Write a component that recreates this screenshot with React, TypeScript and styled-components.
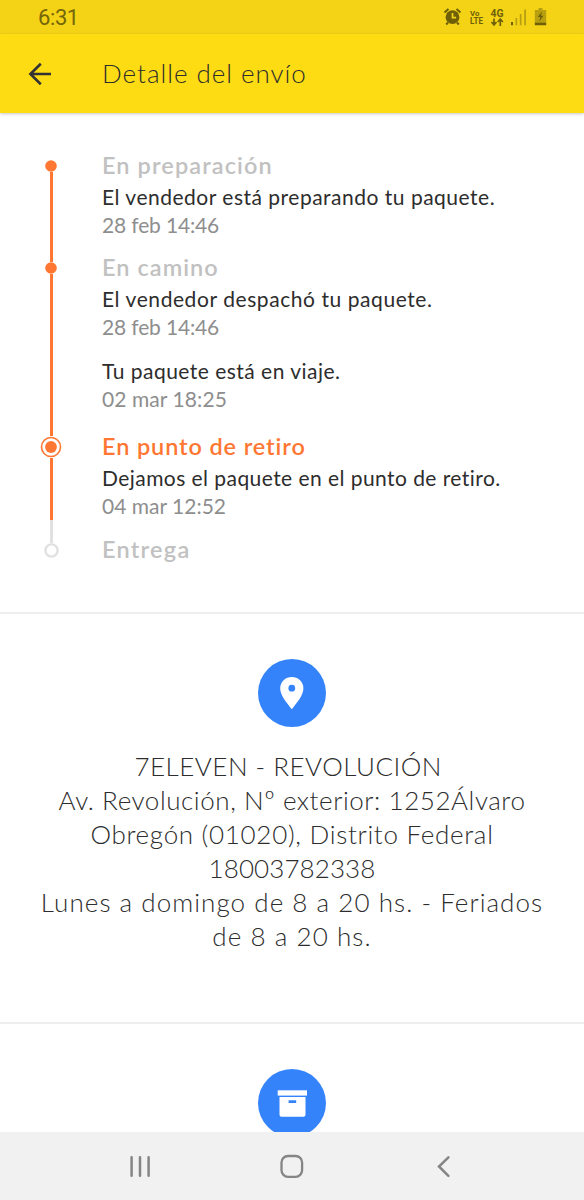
import React from 'react';
import styled, { createGlobalStyle } from 'styled-components';

const ORANGE = '#ff7733';
const GREY = '#e1e1e1';

const GlobalStyle = createGlobalStyle`
  * { box-sizing: border-box; }
  body { margin: 0; background: #fff; }
`;

const Screen = styled.div`
  width: 584px;
  height: 1200px;
  display: flex;
  flex-direction: column;
  overflow: hidden;
  background: #fff;
  color: #2d2d2d;
  font-family: Lato, 'Open Sans', sans-serif;
  font-variant-ligatures: none;
`;

const StatusBar = styled.div`
  height: 34px;
  flex: none;
  display: flex;
  justify-content: space-between;
  align-items: center;
  padding: 0 36px 0 38px;
  background: #f4d317;
  color: #75660a;
`;

const Clock = styled.span`
  font: 400 22px/34px Roboto, sans-serif;
  padding-top: 2px;
  letter-spacing: -0.4px;
`;

const StatusIcons = styled.div`
  display: flex;
  align-items: center;
  svg { display: block; }
`;

const Header = styled.header`
  height: 79px;
  flex: none;
  display: flex;
  align-items: center;
  padding-left: 28px;
  background: #fddc13;
  box-shadow: 0 1px 3px rgba(0, 0, 0, 0.22);
  z-index: 1;
`;

const Title = styled.h1<{ $track: number }>`
  margin: 0 0 2px 50px;
  font-size: 26px;
  font-weight: 300;
  line-height: 34px;
  letter-spacing: ${(p) => p.$track}px;
  white-space: nowrap;
`;

const Content = styled.main`
  flex: 1;
  min-height: 0;
  overflow: hidden;
`;

const Timeline = styled.section`
  height: 501px;
  padding: 24px 0 0 31px;
  border-bottom: 2px solid #eeeeee;
`;

const Stage = styled.div`
  display: flex;
`;

const Rail = styled.div`
  width: 40px;
  flex: none;
  display: flex;
  flex-direction: column;
  align-items: center;
  svg { display: block; }
`;

const Segment = styled.div<{ $color: string; $height?: number }>`
  width: 3px;
  background: ${(p) => p.$color};
  ${(p) => (p.$height === undefined ? 'flex: 1;' : `height: ${p.$height}px;`)}
`;

const StageBody = styled.div<{ $pad: number }>`
  padding: ${(p) => p.$pad}px 0 0 31px;
  white-space: nowrap;
`;

const StageName = styled.h2<{ $active?: boolean; $track: number }>`
  margin: 0 0 3px;
  font-size: 23.5px;
  font-weight: 600;
  line-height: 30px;
  letter-spacing: ${(p) => p.$track}px;
  color: ${(p) => (p.$active ? ORANGE : '#c1c1c1')};
`;

const Event = styled.div`
  font-size: 21px;
  line-height: 28px;
  & + & { margin-top: 16px; }
`;

const EventText = styled.div<{ $track: number }>`
  letter-spacing: ${(p) => p.$track}px;
`;

const EventDate = styled.div<{ $track: number }>`
  color: #8e8e8e;
  letter-spacing: ${(p) => p.$track}px;
`;

const Place = styled.section`
  height: 410px;
  padding-top: 45px;
  border-bottom: 2px solid #eeeeee;
  display: flex;
  flex-direction: column;
  align-items: center;
`;

const PackageInfo = styled.section`
  padding-top: 45px;
  display: flex;
  justify-content: center;
`;

const Badge = styled.div`
  width: 68px;
  height: 68px;
  flex: none;
  border-radius: 50%;
  background: #3483fa;
  svg { display: block; }
`;

const Address = styled.div`
  margin-top: 22px;
  text-align: center;
  font-size: 26px;
  font-weight: 300;
  line-height: 34px;
`;

const AddressLine = styled.div<{ $track: number }>`
  white-space: nowrap;
  letter-spacing: ${(p) => p.$track}px;
`;

const NavBar = styled.nav`
  height: 68px;
  flex: none;
  display: flex;
  justify-content: space-between;
  align-items: center;
  padding: 0 124px;
  background: #f1f1f1;
  svg { display: block; }
`;

type Marker = 'done' | 'current' | 'pending';

const markerSize: Record<Marker, number> = { done: 12, current: 22, pending: 15 };

const StageMarker = ({ kind }: { kind: Marker }) => {
  const size = markerSize[kind];
  const c = size / 2;
  return (
    <svg width={size} height={size}>
      {kind === 'done' && <circle cx={c} cy={c} r="5.8" fill={ORANGE} />}
      {kind === 'current' && (
        <>
          <circle cx={c} cy={c} r="9.5" fill="#fff" stroke={ORANGE} strokeWidth="1.6" />
          <circle cx={c} cy={c} r="5.9" fill={ORANGE} />
        </>
      )}
      {kind === 'pending' && <circle cx={c} cy={c} r="6.1" fill="#fff" stroke={GREY} strokeWidth="2.4" />}
    </svg>
  );
};

interface StageData {
  name: string;
  track: number;
  marker: Marker;
  pad: number;
  lead: number;
  before: string;
  after?: string;
  events: { text: string; track: number; date: string; dateTrack: number }[];
}

const stages: StageData[] = [
  {
    name: 'En preparación', track: 1.1, marker: 'done', pad: 13, lead: 23, before: 'transparent', after: ORANGE,
    events: [{ text: 'El vendedor está preparando tu paquete.', track: 0.5, date: '28 feb 14:46', dateTrack: -0.15 }],
  },
  {
    name: 'En camino', track: 1.05, marker: 'done', pad: 13, lead: 23, before: ORANGE, after: ORANGE,
    events: [
      { text: 'El vendedor despachó tu paquete.', track: 0.57, date: '28 feb 14:46', dateTrack: -0.15 },
      { text: 'Tu paquete está en viaje.', track: 0.48, date: '02 mar 18:25', dateTrack: 0.08 },
    ],
  },
  {
    name: 'En punto de retiro', track: 0.88, marker: 'current', pad: 18, lead: 23, before: ORANGE, after: ORANGE,
    events: [{ text: 'Dejamos el paquete en el punto de retiro.', track: 0.44, date: '04 mar 12:52', dateTrack: 0 }],
  },
  { name: 'Entrega', track: 1.25, marker: 'pending', pad: 14, lead: 23, before: GREY, events: [] },
];

const address: { text: string; track: number }[] = [
  { text: '7ELEVEN - REVOLUCIÓN\u00a0', track: 0.49 },
  { text: 'Av. Revolución, Nº exterior: 1252Álvaro', track: 0.56 },
  { text: 'Obregón (01020), Distrito Federal', track: 0.7 },
  { text: '18003782338', track: 0.09 },
  { text: 'Lunes a domingo de 8 a 20 hs. - Feriados', track: 1.05 },
  { text: 'de 8 a 20 hs.', track: 1.07 },
];

export default function App() {
  return (
    <Screen>
      <GlobalStyle />
      <StatusBar>
        <Clock>6:31</Clock>
        <StatusIcons>
          <svg width="106" height="24" viewBox="442 5 106 24" fill="#6f6008">
            <circle cx="452.5" cy="17.2" r="6.9" />
            <path d="M444.5 12.5l4-3.6M460.5 12.5l-4-3.6M448 22.5l-1.8 2M457 22.5l1.8 2" stroke="#6f6008" strokeWidth="2" />
            <path d="M452.5 13v4.6h3.6" fill="none" stroke="#f4d317" strokeWidth="1.7" />
            <g fontFamily="Roboto, sans-serif" fontWeight="700">
              <text x="470" y="16.4" fontSize="7.8">Vo</text>
              <text x="470" y="24.2" fontSize="8.6" textLength="13" lengthAdjust="spacingAndGlyphs">LTE</text>
              <text x="490.5" y="16.6" fontSize="10.2" textLength="13" lengthAdjust="spacingAndGlyphs">4G</text>
            </g>
            <path d="M494 18.5v6M491.5 22l2.5 3 2.5-3M500.3 26v-6M497.8 22l2.5-3 2.5 3" fill="none" stroke="#6f6008" strokeWidth="1.7" />
            <path d="M511 22h2v3.3h-2z" />
            <path d="M515.5 18h1.7v7.3h-1.7zM519.8 14h1.7v11.3h-1.7zM524.2 9.5h1.8v15.8h-1.8z" opacity=".45" />
            <path d="M538.5 8h4v2h3.7v12.5h-11.4V10h3.7z" opacity=".45" />
            <path d="M534.8 22.5h11.4v2.8h-11.4zM542 11.5l-4.3 5.5h2.6l-1 4.5 4.2-5.7h-2.4z" />
          </svg>
        </StatusIcons>
      </StatusBar>
      <Header>
        <svg width="24" height="24" viewBox="0 0 24 24" fill="none" stroke="#333" strokeWidth="2.6">
          <path d="M23 12H2.5M12.8 1.8L2.4 12l10.4 10.2" />
        </svg>
        <Title $track={0.97}>Detalle del envío</Title>
      </Header>
      <Content>
        <Timeline>
          {stages.map((s) => (
            <Stage key={s.name}>
              <Rail>
                <Segment $color={s.before} $height={s.lead} />
                <StageMarker kind={s.marker} />
                {s.after && <Segment $color={s.after} />}
              </Rail>
              <StageBody $pad={s.pad}>
                <StageName $track={s.track} $active={s.marker === 'current'}>{s.name}</StageName>
                {s.events.map((e) => (
                  <Event key={e.text}>
                    <EventText $track={e.track}>{e.text}</EventText>
                    <EventDate $track={e.dateTrack}>{e.date}</EventDate>
                  </Event>
                ))}
              </StageBody>
            </Stage>
          ))}
        </Timeline>
        <Place>
          <Badge>
            <svg width="68" height="68" viewBox="0 0 68 68">
              <path fill="#fff" fillRule="evenodd" d="M33.8 18A11.6 11.3 0 0 0 22.2 29.3C22.2 36.5 28.5 43.5 33.8 50.3C39.1 43.5 45.4 36.5 45.4 29.3A11.6 11.3 0 0 0 33.8 18zM33.8 25.8a3.4 3.4 0 1 1 0 6.8 3.4 3.4 0 0 1 0-6.8z" />
            </svg>
          </Badge>
          <Address>
            {address.map((l) => (
              <AddressLine key={l.text} $track={l.track}>{l.text}</AddressLine>
            ))}
          </Address>
        </Place>
        <PackageInfo>
          <Badge>
            <svg width="68" height="68" viewBox="0 0 68 68" fill="#fff">
              <path d="M19.7 21.3h29.3v5.3H19.7z" />
              <path fillRule="evenodd" d="M21.5 28h26v17.7q0 2-2 2h-22q-2 0-2-2zM30.6 31.2v2.9h7.6v-2.9z" />
            </svg>
          </Badge>
        </PackageInfo>
      </Content>
      <NavBar>
        <svg width="32" height="32" viewBox="124 1150 32 32" fill="none" stroke="#858585" strokeWidth="2.5" strokeLinecap="round">
          <path d="M131.6 1157.2v18.6M140 1157.2v18.6M148.6 1157.2v18.6" />
        </svg>
        <svg width="32" height="32" viewBox="276 1150 32 32" fill="none" stroke="#858585" strokeWidth="2.3">
          <rect x="281.5" y="1156" width="20.6" height="20.8" rx="6.5" />
        </svg>
        <svg width="32" height="32" viewBox="428 1150 32 32" fill="none" stroke="#858585" strokeWidth="2.5" strokeLinecap="round">
          <path d="M448.4 1157.3l-9.4 9.2 9.4 9.3" />
        </svg>
      </NavBar>
    </Screen>
  );
}
